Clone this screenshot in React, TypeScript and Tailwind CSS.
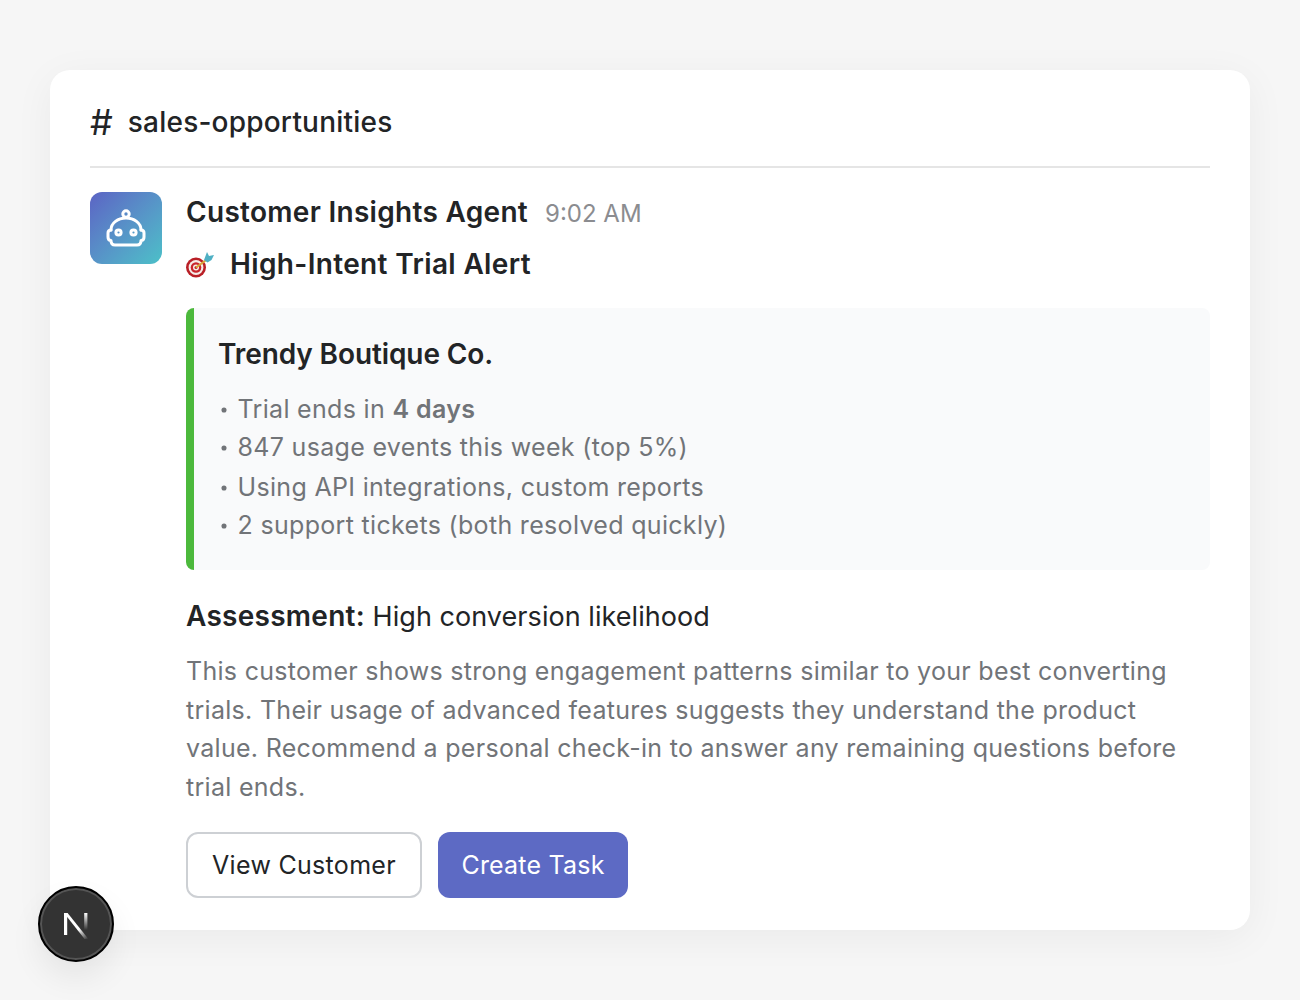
function Bullet({ children, className = "" }: { children: React.ReactNode; className?: string }) {
  return (
    <li className={`flex h-[38px] items-center ${className}`}>
      <span className="mr-[10.5px] ml-[3px] h-[6px] w-[6px] shrink-0 scale-[0.85] rounded-full bg-[#717478]" />
      <span>{children}</span>
    </li>
  );
}

export default function App() {
  return (
    <div className="min-h-[1000px] bg-[#f6f6f6] px-[50px] pt-[70px] font-['Inter',sans-serif] text-[#222426]">
      <div className="relative h-[860px] rounded-[20px] bg-white px-10 pt-[30px] shadow-[0_8px_40px_rgba(0,0,0,0.05)]">
        <div className="flex h-[68px] items-start gap-[15px] border-b-2 border-[#e5e5e5]">
          <span className="text-[36px] leading-[44px] font-normal">#</span>
          <span className="text-[28px] leading-[44px] font-medium tracking-[0.21px]">sales-opportunities</span>
        </div>
        <div className="mt-6 flex gap-6">
          <div className="flex h-[72px] w-[72px] shrink-0 items-center justify-center rounded-xl bg-gradient-to-br from-[#5b63c4] to-[#4bc0c8]">
            <svg width="44" height="44" viewBox="0 0 44 44" fill="none" stroke="#fff" strokeWidth="3" strokeLinecap="round" strokeLinejoin="round">
              <circle cx="22" cy="8" r="3.2" />
              <path d="M7 24C7 17 14 12 22 12C30 12 37 17 37 24" />
              <path d="M7 24C5 24 4 25.5 4 27V31C4 33 5 34.5 7 34.5C7 37.5 8.5 39 11 39H33C35.5 39 37 37.5 37 34.5C39 34.5 40 33 40 31V27C40 25.5 39 24 37 24" />
              <circle cx="14.5" cy="26.5" r="2.6" />
              <circle cx="29.5" cy="26.5" r="2.6" />
            </svg>
          </div>
          <div className="min-w-0 flex-1">
            <div className="flex h-10 items-baseline gap-[17px]">
              <span className="text-[28px] leading-10 font-semibold tracking-[0.3px]">Customer Insights Agent</span>
              <span className="text-[24px] leading-10 text-[#8b8c90]">9:02 AM</span>
            </div>
            <div className="mt-3 flex h-10 items-center gap-[14px] text-[28px] font-semibold tracking-[0.35px]">
              <svg width="30" height="26" viewBox="0 0 30 26" className="mt-[1px] shrink-0">
                <circle cx="10" cy="15.5" r="10" fill="#b91f26" />
                <circle cx="10" cy="15.5" r="7.4" fill="#f6ece8" />
                <circle cx="10" cy="15.5" r="5.3" fill="#c9252c" />
                <circle cx="10" cy="15.5" r="3" fill="#f6ece8" />
                <circle cx="10" cy="15.5" r="1.5" fill="#c9252c" />
                <path d="M10 15.5 21 7.5" stroke="#d8a83c" strokeWidth="2" />
                <path d="M18 8 21 0l2 4 5-1-2.5 5-4 2.5z" fill="#4fb0c4" />
              </svg>
              <span>High-Intent Trial Alert</span>
            </div>
            <div className="mt-6 h-[262px] rounded-lg border-l-[8px] border-[#4cb93c] bg-[#f9fafb] pl-6 pt-[26px]">
              <div className="text-[28px] leading-10 font-semibold tracking-[-0.1px]">Trendy Boutique Co.</div>
              <ul className="mt-[17px] text-[25px] tracking-[0.32px] text-[#717478]">
                <Bullet>Trial ends in <b className="font-semibold">4 days</b></Bullet>
                <Bullet>847 usage events this week (top 5%)</Bullet>
                <Bullet className="mt-0.5">Using API integrations, custom reports</Bullet>
                <Bullet>2 support tickets (both resolved quickly)</Bullet>
              </ul>
            </div>
            <p className="mt-[26px] text-[27px] leading-10 tracking-[0.05px]"><b className="text-[28px] font-semibold tracking-[0.27px]">Assessment:</b> High conversion likelihood</p>
            <p className="mt-[15px] text-[25px] leading-[38.67px] tracking-[0.29px] text-[#717478]">This customer shows strong engagement patterns similar to your best converting trials. Their usage of advanced features suggests they understand the product value. Recommend a personal check-in to answer any remaining questions before trial ends.</p>
            <div className="mt-[25px] flex gap-4">
              <button className="h-[66px] w-[236px] rounded-xl border-2 border-[#cdd0d4] bg-white pt-[2px] text-[25px] tracking-[0.3px] text-[#222426]">View Customer</button>
              <button className="h-[66px] w-[190px] rounded-xl bg-[#5d6ac4] pt-[2px] text-[25px] tracking-[0.2px] text-white">Create Task</button>
            </div>
          </div>
        </div>
        <div className="absolute -left-3 top-[816px] flex h-[76px] w-[76px] items-center justify-center rounded-full border-2 border-black bg-[#333] shadow-[0_16px_32px_rgba(0,0,0,0.07),inset_0_0_0_2px_#555]">
          <svg width="32" height="32" viewBox="0 0 32 32">
            <defs>
              <linearGradient id="n1" gradientUnits="userSpaceOnUse" x1="14" y1="14" x2="28" y2="31"><stop offset="0.4" stopColor="#fff" /><stop offset="1" stopColor="#fff" stopOpacity="0" /></linearGradient>
              <linearGradient id="n2" gradientUnits="userSpaceOnUse" x1="0" y1="5" x2="0" y2="22"><stop offset="0" stopColor="#fff" /><stop offset="1" stopColor="#fff" stopOpacity="0" /></linearGradient>
            </defs>
            <path d="M4 5h3.6L28.4 31h-3.8z" fill="url(#n1)" />
            <rect x="24.2" y="5" width="3.2" height="17" fill="url(#n2)" />
            <rect x="4" y="5" width="3.2" height="22" fill="#fff" />
          </svg>
        </div>
      </div>
    </div>
  );
}
